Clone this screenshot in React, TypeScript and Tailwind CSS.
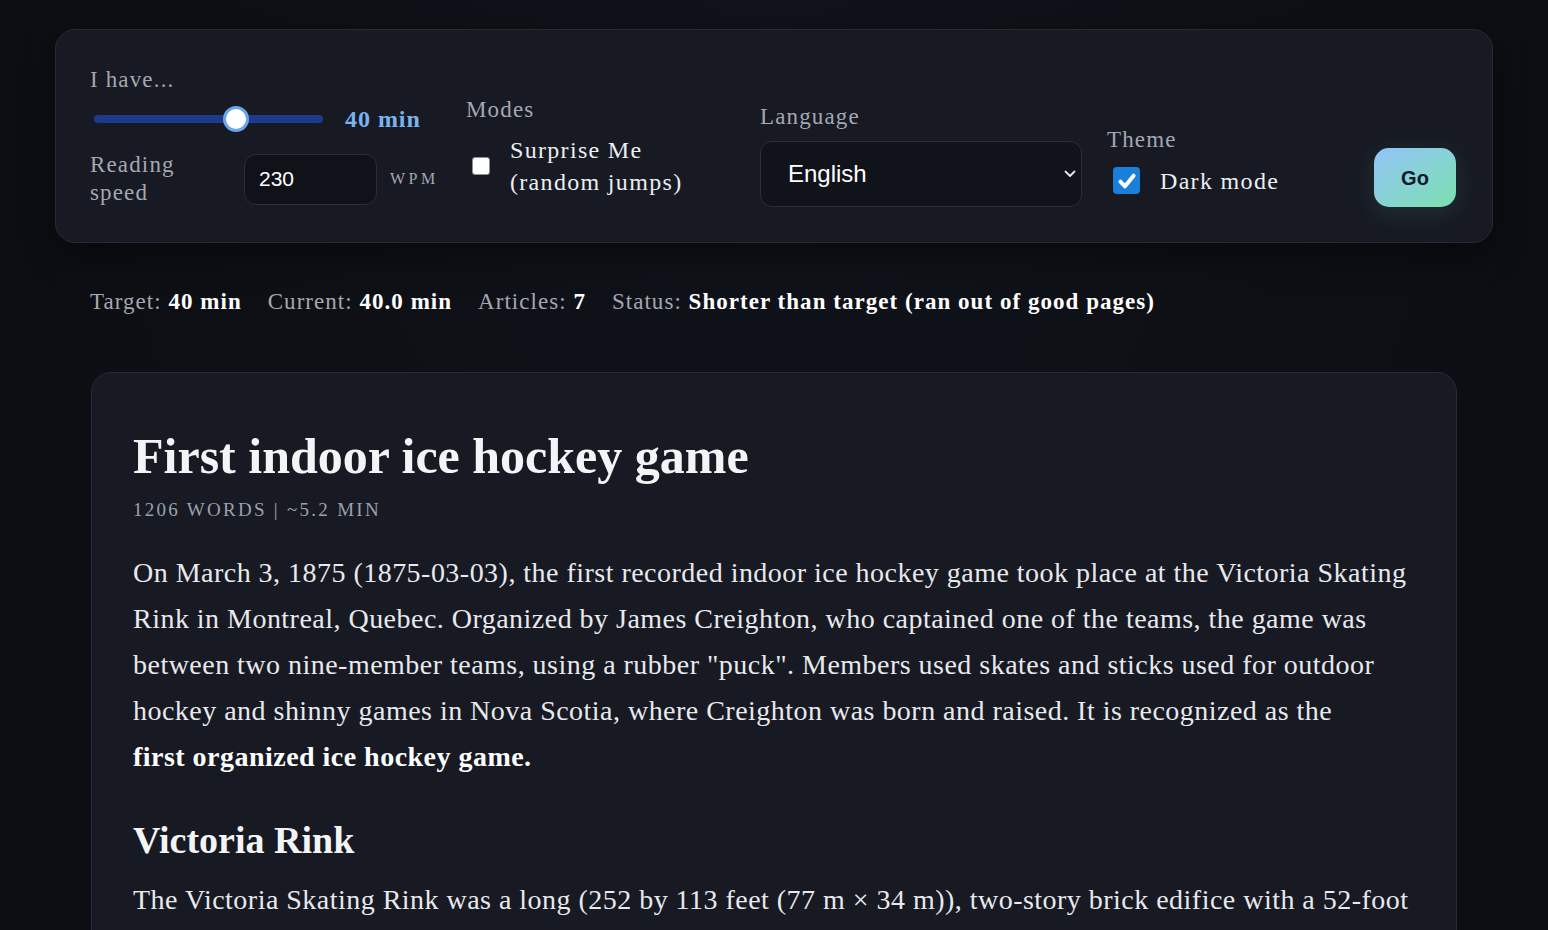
import React from "react";

const serif = "font-['Liberation_Serif','Times_New_Roman',serif]";
const sans = "font-['Liberation_Sans',Arial,sans-serif]";

function Label({ children }: { children: React.ReactNode }) {
  return <div className="text-[23px] leading-[28px] tracking-[0.05em] text-[#a3a8b1]">{children}</div>;
}

export default function App() {
  return (
    <div className={`min-h-screen w-full bg-[radial-gradient(ellipse_at_top,#10131a_0%,#0c0e13_70%)] ${serif} pt-[29px] pb-10`}>
      {/* Control panel */}
      <div className="mx-auto flex w-[1438px] items-end rounded-[20px] border border-[#262a35] bg-[#171a23] pl-[34px] pr-[36px] pb-[35px] pt-[36px] shadow-[0_12px_36px_rgba(0,0,0,0.45)]">
        {/* Column 1 */}
        <div className="flex w-[350px] flex-col">
          <Label>I have...</Label>
          <div className="mt-[10px] flex h-[30px] items-center">
            <div className="relative ml-[4px] h-[8px] w-[229px] rounded-full bg-[#1e3a8f]">
              <div className="absolute left-[129px] top-1/2 h-[26px] w-[26px] -translate-y-1/2 rounded-full border-[3px] border-[#6aa5ee] bg-white" />
            </div>
            <div className="ml-[22px] text-[24px] font-bold tracking-[0.04em] text-[#7ab2f0]">40 min</div>
          </div>
          <div className="mt-[17px] flex items-center">
            <div className="w-[154px] text-[23px] leading-[28px] tracking-[0.05em] text-[#a3a8b1]">
              Reading
              <br />
              speed
            </div>
            <div className={`flex h-[51px] w-[133px] items-center rounded-[12px] border border-[#2a2e39] bg-[#0f1219] pl-[14px] text-[21px] text-white ${sans}`}>
              230
            </div>
            <div className="ml-[13px] text-[16px] tracking-[0.22em] text-[#a3a8b1]">WPM</div>
          </div>
        </div>

        {/* Modes */}
        <div className="mb-[9px] ml-[26px] flex w-[294px] flex-col">
          <Label>Modes</Label>
          <div className="mt-[10px] flex items-center">
            <div className="ml-[6px] h-[18px] w-[18px] rounded-[3px] border border-[#8a8f99] bg-white" />
            <div className="ml-[20px] text-[24px] leading-[32px] tracking-[0.055em] text-[#eceef1]">
              Surprise Me
              <br />
              (random jumps)
            </div>
          </div>
        </div>

        {/* Language */}
        <div className="flex w-[322px] flex-col">
          <Label>Language</Label>
          <div className={`mt-[10px] flex h-[66px] items-center justify-between rounded-[12px] border border-[#2a2e39] bg-[#10131a] pl-[27px] pr-[5px] text-[24px] text-white ${sans}`}>
            <span>English</span>
            <svg width="12" height="8" viewBox="0 0 12 8" fill="none">
              <path d="M1.5 1.5L6 6L10.5 1.5" stroke="#e5e7eb" strokeWidth="1.8" strokeLinecap="round" strokeLinejoin="round" />
            </svg>
          </div>
        </div>

        {/* Theme */}
        <div className="mb-[10px] ml-[25px] flex w-[267px] flex-col">
          <Label>Theme</Label>
          <div className="mt-[10px] flex h-[33px] items-center">
            <div className="ml-[6px] flex h-[27px] w-[27px] items-center justify-center rounded-[4px] bg-[#1a7edb]">
              <svg width="22" height="22" viewBox="0 0 20 20" fill="none">
                <path d="M4 10.5L8.2 14.8L16 5.2" stroke="white" strokeWidth="3.6" strokeLinecap="round" strokeLinejoin="round" />
              </svg>
            </div>
            <div className="ml-[20px] text-[24px] leading-[32px] tracking-[0.055em] text-[#eceef1]">Dark mode</div>
          </div>
        </div>

        {/* Go */}
        <button
          className={`flex h-[59px] w-[82px] items-center justify-center rounded-[15px] bg-linear-to-br from-[#93c3f7] to-[#7be0ae] text-[20px] font-bold text-[#111827] shadow-[0_6px_24px_rgba(125,211,200,0.12)] ${sans}`}
        >
          Go
        </button>
      </div>

      {/* Stats */}
      <div className="mx-auto mt-[44px] flex w-[1368px] items-center gap-[26px] text-[23px] leading-[30px] tracking-[0.045em] text-[#a3a8b1]">
        <span>
          Target: <b className="text-white">40 min</b>
        </span>
        <span>
          Current: <b className="text-white">40.0 min</b>
        </span>
        <span>
          Articles: <b className="text-white">7</b>
        </span>
        <span>
          Status: <b className="text-white">Shorter than target (ran out of good pages)</b>
        </span>
      </div>

      {/* Article */}
      <div className="mx-auto mt-[55px] w-[1366px] rounded-[20px] border border-[#262a35] bg-[#171a23] px-[41px] pb-10 pt-[53px]">
        <h1 className="text-[50px] font-bold leading-[60px] text-[#f3f4f6]">First indoor ice hockey game</h1>
        <div className="mt-[11px] text-[19px] uppercase leading-[26px] tracking-[0.12em] text-[#9ba1ab]">1206 words | ~5.2 min</div>
        <p className="mt-[27px] whitespace-nowrap text-[28px] leading-[46px] tracking-[0.017em] text-[#e8e9ec]">
          On March 3, 1875 (1875-03-03), the first recorded indoor ice hockey game took place at the Victoria Skating
          <br />
          Rink in Montreal, Quebec. Organized by James Creighton, who captained one of the teams, the game was
          <br />
          between two nine-member teams, using a rubber "puck". Members used skates and sticks used for outdoor
          <br />
          hockey and shinny games in Nova Scotia, where Creighton was born and raised. It is recognized as the
          <br />
          <b className="text-white">first organized ice hockey game.</b>
        </p>
        <h2 className="mt-[36px] text-[38px] font-bold leading-[48px] text-[#f3f4f6]">Victoria Rink</h2>
        <p className="mt-[13px] whitespace-nowrap text-[28px] leading-[46px] tracking-[0.017em] text-[#e8e9ec]">
          The Victoria Skating Rink was a long (252 by 113 feet (77 m × 34 m)), two-story brick edifice with a 52-foot
          <br />
          (16 m) high arched roof. The ice surface measured 204 by 80 feet (62 m × 24 m), roughly the same size as
          <br />
          today's National Hockey League rinks.
        </p>
      </div>
    </div>
  );
}
